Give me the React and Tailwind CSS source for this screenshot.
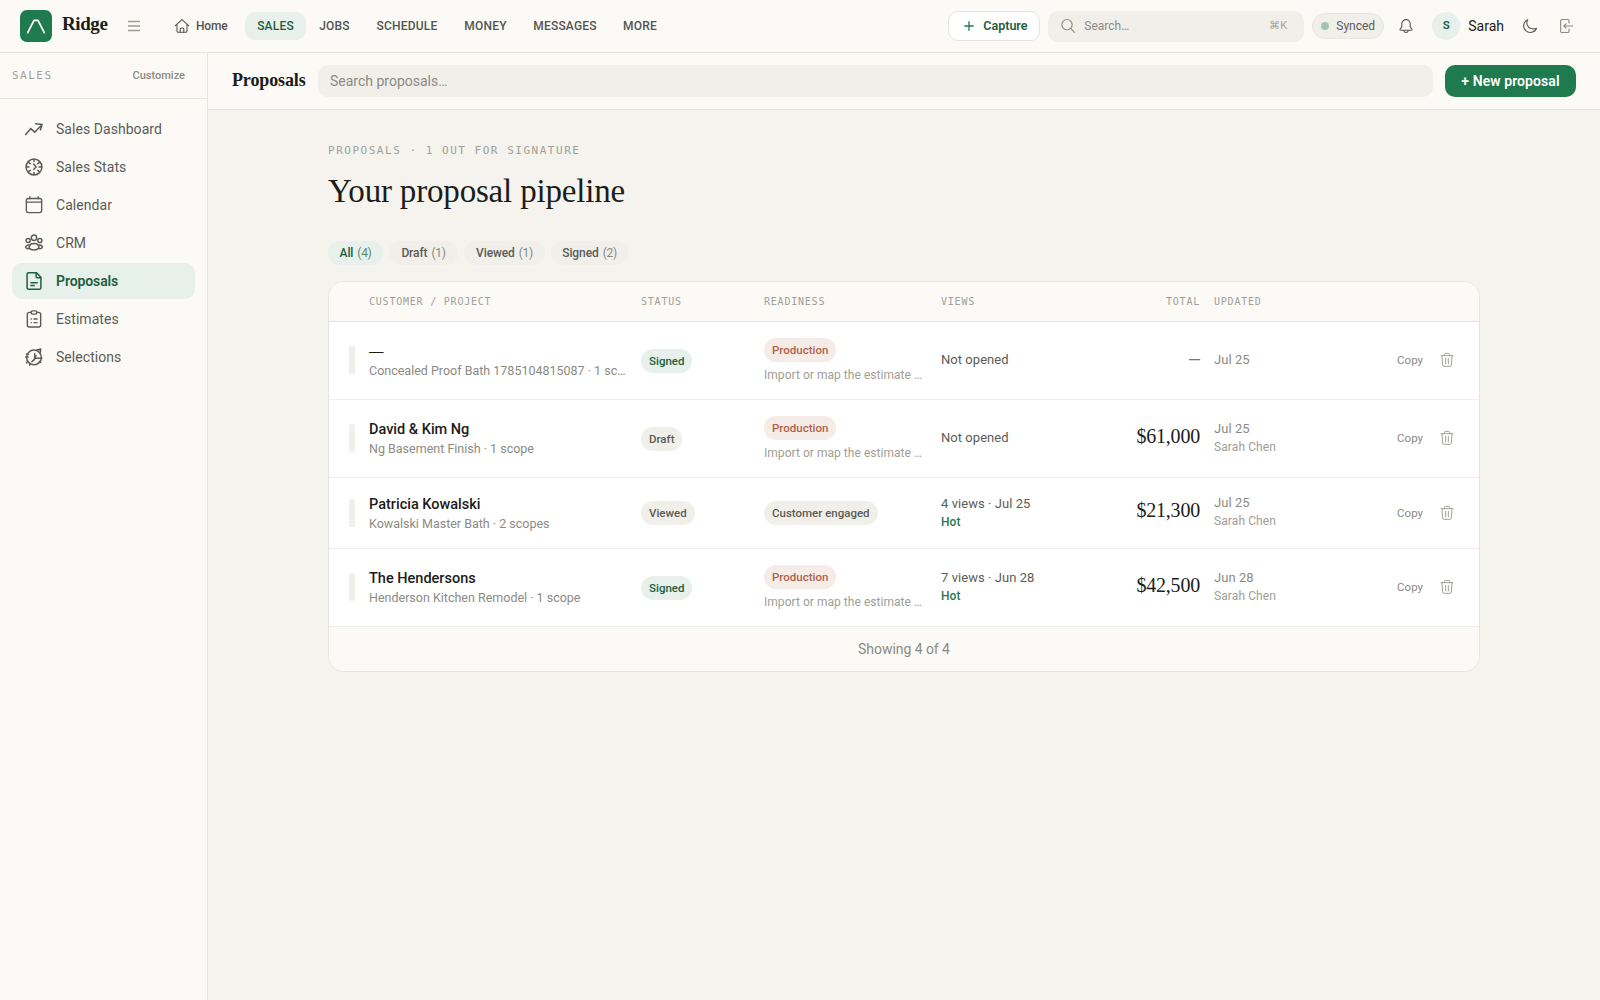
import clsx from 'clsx';

// Shared wrapper for the outline icons
function Icon({ className = 'size-5', strokeWidth = 1.5, children }) {
  return (
    <svg
      viewBox="0 0 24 24"
      fill="none"
      stroke="currentColor"
      strokeWidth={strokeWidth}
      strokeLinecap="round"
      strokeLinejoin="round"
      className={clsx('shrink-0', className)}
    >
      {children}
    </svg>
  );
}

const TrendIcon = () => (
  <Icon strokeWidth={1.8}>
    <path d="M2 18.5 8.2 11.5l4.6 4.3 8.7-8.8M14 5.800l7.700.7-2 6.500" />
  </Icon>
);

const StatsIcon = () => (
  <Icon strokeWidth={1.8}>
    <circle cx="12" cy="12" r="9.500" />
    <path d="M12 3v2.500M12 18.500V21M3 12h3M18 12h3M5.500 6.500l2 1.500M16.500 16l2 1.500M18.500 6.500l-2 1.500M7.500 16l-2 1.500M11.500 8.500l3 3.500-3 3" />
  </Icon>
);

const CalendarIcon = () => (
  <Icon strokeWidth={1.6}>
    <rect x="2.8" y="4.2" width="18.4" height="17" rx="2.5" />
    <path d="M2.8 8.500h18.400M7 2v2.500M17 2v2.500" />
  </Icon>
);

const PeopleIcon = () => (
  <Icon strokeWidth={1.8}>
    <circle cx="12" cy="5.7" r="3.2" />
    <circle cx="5" cy="9" r="2.5" />
    <circle cx="19" cy="9" r="2.5" />
    <path d="M6 18c0-3.500 2.500-5.500 6-5.500s6 2 6 5.500c-1.500 1.800-3.500 2.500-6 2.500S7.500 19.800 6 18ZM5.500 14.500c-2 0-3.500 1.200-3.500 3 .8 1 2 1.500 3.500 1.300M18.500 14.500c2 0 3.500 1.200 3.500 3-.8 1-2 1.500-3.500 1.300" />
  </Icon>
);

const DocumentIcon = () => (
  <Icon strokeWidth={1.8}>
    <path d="M5.500 2h9.500l5.300 5.500v12.500a1.800 1.800 0 0 1-1.800 1.800H5.500a1.800 1.800 0 0 1-1.800-1.800V3.800A1.800 1.800 0 0 1 5.500 2Z" />
    <path d="M14.500 2.300v4.200a1.500 1.500 0 0 0 1.500 1.500h4M8.300 14h7.500M8.300 17.500h4" />
  </Icon>
);

const ClipboardIcon = () => (
  <Icon strokeWidth={1.7}>
    <path d="M8.500 4H6.300A2.300 2.300 0 0 0 4 6.300v13A2.300 2.300 0 0 0 6.300 21.600h11.400a2.300 2.300 0 0 0 2.300-2.300v-13A2.300 2.300 0 0 0 17.700 4h-2.200" />
    <path d="M10.300 2.200h3.400a1.800 1.800 0 0 1 1.800 1.800v.3c0 1-.8 1.800-1.800 1.800h-3.400c-1 0-1.800-.8-1.800-1.800V4a1.800 1.800 0 0 1 1.800-1.800ZM8.600 12h.2M8.600 16.300h.2M12 12h3.700M12 16.300h3.700" />
  </Icon>
);

const SelectionsIcon = () => (
  <Icon strokeWidth={1.8}>
    <circle cx="12" cy="12.5" r="8.800" />
    <path d="M12.800 8v6.500L9.500 17.500M12.800 13.500H21.500M14.500 10.500l-1.700 3M15.500 3.500l4.500-1-.5 4.500M2 12h3M3 8.500l2 .5M4.500 17.500 3 19M7.500 20l-.8 1.800M18.500 17.500l1.500 1" />
  </Icon>
);

const HomeIcon = () => (
  <Icon className="size-4" strokeWidth={1.6}>
    <path d="m2 11.500 10-9 10 9M4.500 9.500v10a2 2 0 0 0 2 2h11a2 2 0 0 0 2-2v-10" />
    <path d="M9.300 21.500v-5a1.500 1.500 0 0 1 1.500-1.500h2.400a1.500 1.500 0 0 1 1.500 1.500v5" />
  </Icon>
);

const SearchIcon = () => (
  <Icon className="size-4" strokeWidth={1.7}>
    <circle cx="10.5" cy="10" r="7.7" />
    <path d="m16.500 16 5 5.500" />
  </Icon>
);

const BellIcon = () => (
  <Icon className="size-4" strokeWidth={1.7}>
    <path d="M12 2.500a6.300 6.300 0 0 0-6.300 6.300v4.400c0 1.300-2.700 2.800-2.700 4 0 .8.600 1.100 1.300 1.100h15.400c.7 0 1.300-.3 1.300-1.100 0-1.200-2.700-2.700-2.700-4V8.800A6.300 6.300 0 0 0 12 2.500ZM8.500 18.500c.3 2 1.700 3.200 3.500 3.200s3.200-1.200 3.500-3.200" />
  </Icon>
);

const MoonIcon = () => (
  <Icon className="size-4" strokeWidth={1.7}>
    <path d="M8.500 2.500a10 10 0 1 0 13.300 12.800c-6 2.400-11.800.3-13.800-4.300-1.200-2.900-.8-6 .5-8.500Z" />
  </Icon>
);

const LogoutIcon = () => (
  <Icon className="size-4" strokeWidth={1.7}>
    <path d="M16.500 7.500V4.300a2 2 0 0 0-2-2H6a2 2 0 0 0-2 2v15.400a2 2 0 0 0 2 2h8.500a2 2 0 0 0 2-2v-3.200M22 12H9M12 8.800 8.800 12l3.200 3.200" />
  </Icon>
);

const TrashIcon = () => (
  <Icon className="size-4" strokeWidth={1.5}>
    <path d="M3 5.500h18M8 5.500V4.300A2.300 2.300 0 0 1 10.300 2h3.400A2.300 2.300 0 0 1 16 4.300v1.200M4.500 5.500l.9 13.800a2.300 2.300 0 0 0 2.300 2.200h8.600a2.300 2.300 0 0 0 2.300-2.200L19.500 5.500M10 9.500v8.500M14 9.500v8.500" />
  </Icon>
);

const topNav = [
  { label: 'SALES', width: 'w-[61px]', active: true },
  { label: 'JOBS', width: 'w-[57px]' },
  { label: 'SCHEDULE', width: 'w-[88px]' },
  { label: 'MONEY', width: 'w-[69px]' },
  { label: 'MESSAGES', width: 'w-[90px]' },
  { label: 'MORE', width: 'w-[60px]' },
];

const sideNav = [
  { label: 'Sales Dashboard', icon: TrendIcon },
  { label: 'Sales Stats', icon: StatsIcon },
  { label: 'Calendar', icon: CalendarIcon },
  { label: 'CRM', icon: PeopleIcon },
  { label: 'Proposals', icon: DocumentIcon, active: true },
  { label: 'Estimates', icon: ClipboardIcon },
  { label: 'Selections', icon: SelectionsIcon },
];

const filters = [
  { label: 'All', count: 4, width: 'w-[55px]', active: true },
  { label: 'Draft', count: 1, width: 'w-[69px]' },
  { label: 'Viewed', count: 1, width: 'w-[81px]' },
  { label: 'Signed', count: 2, width: 'w-[77px]' },
];

const proposals = [
  {
    id: 1,
    customer: '—',
    project: 'Concealed Proof Bath 1785104815087 · 1 scope',
    status: 'Signed',
    readiness: 'Production',
    note: 'Import or map the estimate before production',
    views: 'Not opened',
    total: null,
    updated: 'Jul 25',
  },
  {
    id: 2,
    customer: 'David & Kim Ng',
    project: 'Ng Basement Finish · 1 scope',
    status: 'Draft',
    readiness: 'Production',
    note: 'Import or map the estimate before production',
    views: 'Not opened',
    total: '$61,000',
    updated: 'Jul 25',
    owner: 'Sarah Chen',
  },
  {
    id: 3,
    customer: 'Patricia Kowalski',
    project: 'Kowalski Master Bath · 2 scopes',
    status: 'Viewed',
    readiness: 'Customer engaged',
    views: '4 views · Jul 25',
    hot: true,
    total: '$21,300',
    updated: 'Jul 25',
    owner: 'Sarah Chen',
  },
  {
    id: 4,
    customer: 'The Hendersons',
    project: 'Henderson Kitchen Remodel · 1 scope',
    status: 'Signed',
    readiness: 'Production',
    note: 'Import or map the estimate before production',
    views: '7 views · Jun 28',
    hot: true,
    total: '$42,500',
    updated: 'Jun 28',
    owner: 'Sarah Chen',
  },
];

const columns =
  'grid grid-cols-[6px_258px_109px_163px_147px_98px_1fr_auto] gap-x-[14px] items-center px-5';

function Badge({ tone, children }) {
  return (
    <span
      className={clsx(
        'inline-flex h-6 items-center rounded-full px-2 pt-0.5 text-[11.5px] font-[530]',
        tone === 'green' && 'bg-[#e8f0eb] text-[#1b6040]',
        tone === 'clay' && 'bg-[#f6ece7] text-[#b0614a]',
        tone === 'neutral' && 'bg-[#f0efea] text-[#5c5c56]',
      )}
    >
      {children}
    </span>
  );
}

function TopBar() {
  return (
    <header className="flex h-[53px] shrink-0 items-center border-b border-[#e6e5dd] bg-[#fbfaf6] pr-[26px] pl-5">
      {/* Brand */}
      <div className="flex size-8 items-center justify-center rounded-[7px] bg-[#1f7a4e]">
        <svg viewBox="0 0 32 32" className="size-8" fill="none" stroke="#fff" strokeWidth="1.7" strokeLinecap="round" strokeLinejoin="round">
          <path d="M7.700 22.700 14 10.300h4l6.300 12.400" />
        </svg>
      </div>
      <div className="ml-[10px] w-[65px] pb-[3px] font-['Liberation_Serif',serif] text-[19px] font-bold tracking-[-0.4px] text-[#1c1c19]">
        Ridge
      </div>
      <svg viewBox="0 0 14 12" className="h-3 w-[14px]" stroke="#9b9b93" strokeWidth="1.6">
        <path d="M1 1.500h12M1 6h12M1 10.500h12" />
      </svg>

      {/* Primary navigation */}
      <nav className="ml-[33px] flex items-center text-[12px] font-medium text-[#55554f]">
        <a className="flex w-[71px] items-center gap-[6px]">
          <HomeIcon />
          <span className="tracking-[-0.2px]">Home</span>
        </a>
        {topNav.map((item) => (
          <a
            key={item.label}
            className={clsx(
              'flex h-7 items-center justify-center rounded-[10px] tracking-[0.2px]',
              item.width,
              item.active && 'bg-[#e8f0eb] text-[#1b6040]',
            )}
          >
            {item.label}
          </a>
        ))}
      </nav>

      {/* Utilities */}
      <div className="ml-auto flex items-center">
        <button className="flex h-[30px] w-[92px] items-center rounded-[10px] border border-[#e6e5dd] bg-white pl-[15px] text-[12.5px] font-[570] text-[#1b6040]">
          <svg viewBox="0 0 10 10" className="size-[10px]" stroke="#1f7a4e" strokeWidth="1.3">
            <path d="M5 .3v9.400M.3 5h9.400" />
          </svg>
          <span className="ml-[9px]">Capture</span>
        </button>
        <div className="ml-2 flex h-[31px] w-64 items-center rounded-[10px] bg-[#f0efea] pr-[17px] pl-3 text-[#8b8b83]">
          <SearchIcon />
          <span className="ml-2 text-[12px]">Search…</span>
          <span className="ml-auto text-[11px] text-[#a5a59d]">⌘K</span>
        </div>
        <div className="ml-2 flex h-[26px] w-[72px] items-center gap-[7px] rounded-full border border-[#e6e5dd] bg-[#f0efea] pl-2 text-[12px] font-[450] text-[#5c5c56]">
          <span className="size-2 rounded-full bg-[#a5c5b4]" />
          Synced
        </div>
        <button className="ml-[14px] text-[#5c5c56]">
          <BellIcon />
        </button>
        <div className="ml-[18px] flex size-7 items-center justify-center rounded-full bg-[#e8f0eb] text-[11.5px] font-semibold text-[#1b6040]">
          S
        </div>
        <span className="ml-2 text-[14px] font-[450] text-[#1c1c19]">Sarah</span>
        <button className="ml-[18px] text-[#5c5c56]">
          <MoonIcon />
        </button>
        <button className="ml-5 text-[#8b8b83]">
          <LogoutIcon />
        </button>
      </div>
    </header>
  );
}

function Sidebar() {
  return (
    <aside className="w-52 shrink-0 border-r border-[#e6e5dd] bg-[#fbfaf6]">
      <div className="flex h-[46px] items-center justify-between border-b border-[#e6e5dd] pr-[22px] pl-3">
        <span className="pt-0.5 font-['DejaVu_Sans_Mono',monospace] text-[11px] tracking-[1.5px] text-[#a0a098]">SALES</span>
        <span className="pt-px text-[11px] font-medium text-[#8b8b83]">Customize</span>
      </div>
      <nav className="flex flex-col gap-[2px] p-3">
        {sideNav.map((item) => (
          <a
            key={item.label}
            className={clsx(
              'flex h-9 items-center gap-3 rounded-[10px] px-3 text-[14px]',
              item.active
                ? 'bg-[#e8f0eb] font-[560] tracking-[-0.1px] text-[#1b6040]'
                : 'font-[440] tracking-[0.05px] text-[#5c5c56]',
            )}
          >
            <item.icon />
            {item.label}
          </a>
        ))}
      </nav>
    </aside>
  );
}

function ProposalRow({ proposal }) {
  const { customer, project, status, readiness, note, views, hot, total, updated, owner } = proposal;

  return (
    <div className={clsx(columns, 'border-b border-[#efeee8]', note ? 'h-[78px]' : 'h-[71px]')}>
      <span className="mb-px h-7 w-[6px] rounded-[2px] bg-[#f0efea]" />
      <div className="min-w-0">
        {customer === '—' ? (
          <div className="pb-px font-['Liberation_Sans',sans-serif] text-[14.5px] leading-5 font-medium text-[#1c1c19]">—</div>
        ) : (
          <div className="pt-px text-[14.5px] leading-5 font-medium text-[#1c1c19]">{customer}</div>
        )}
        <div className="truncate text-[12.5px] leading-[18px] text-[#8b8b83]">{project}</div>
      </div>
      <div className="flex">
        <Badge tone={status === 'Signed' ? 'green' : 'neutral'}>{status}</Badge>
      </div>
      <div className="min-w-0">
        <div className="flex">
          <Badge tone={note ? 'clay' : 'neutral'}>{readiness}</Badge>
        </div>
        {note && (
          <div className="mt-1 w-[160px] truncate text-[12px] leading-[18px] tracking-[0.04px] text-[#a0a098]">{note}</div>
        )}
      </div>
      <div className={clsx('text-[13px] leading-[19px] tracking-[0.05px] text-[#5c5c56]', hot ? 'pb-px' : 'pb-0.5')}>
        {views}
        {hot && <div className="text-[12px] leading-[19px] font-medium text-[#1f7a4e]">Hot</div>}
      </div>
      {total ? (
        <div className="pb-[6px] text-right font-['Liberation_Serif',serif] text-[20px] tracking-[-0.2px] text-[#1c1c19]">
          {total}
        </div>
      ) : (
        <div className="pb-0.5 text-right font-['Liberation_Sans',sans-serif] text-[11px] font-bold text-[#77776f]">—</div>
      )}
      <div className="pb-0.5 text-[13px] leading-[19px] tracking-[0.05px] text-[#8b8b83]">
        {updated}
        {owner && <div className="text-[12px] leading-[19px] tracking-[0.1px] text-[#a0a098]">{owner}</div>}
      </div>
      <div className="flex items-center gap-4 pr-1 pb-px text-[#a0a098]">
        <span className="pt-0.5 text-[11.5px] text-[#8b8b83]">Copy</span>
        <TrashIcon />
      </div>
    </div>
  );
}

function App() {
  return (
    <div className="flex h-screen flex-col overflow-hidden bg-[#f4f3ee] font-['Roboto',sans-serif]">
      <TopBar />
      <div className="flex min-h-0 flex-1">
        <Sidebar />
        <main className="flex min-w-0 flex-1 flex-col">
          {/* Page toolbar */}
          <div className="flex h-[57px] items-center gap-3 border-b border-[#e6e5dd] bg-[#fbfaf6] px-6">
            <h1 className="w-[74px] pb-0.5 font-['Liberation_Serif',serif] text-[18px] font-bold tracking-[-0.13px] text-[#1c1c19]">
              Proposals
            </h1>
            <div className="flex h-8 flex-1 items-center rounded-[10px] bg-[#f0efea] px-3 text-[14px] text-[#8b8b83]">
              Search proposals…
            </div>
            <button className="h-8 w-[131px] rounded-[10px] bg-[#1f7a4e] text-[14px] font-semibold tracking-[0.08px] text-white">
              + New proposal
            </button>
          </div>

          <div className="mx-auto w-full max-w-6xl pt-[33px]">
            <p className="font-['DejaVu_Sans_Mono',monospace] text-[11px] leading-4 tracking-[1.52px] text-[#a0a098]">
              PROPOSALS · 1 OUT FOR SIGNATURE
            </p>
            <h2 className="mt-3 font-['Liberation_Serif',serif] text-[33px] leading-[40px] tracking-[-0.18px] text-[#1c1c19]">
              Your proposal pipeline
            </h2>

            {/* Status filters */}
            <div className="mt-[30px] flex gap-[6px]">
              {filters.map((filter) => (
                <button
                  key={filter.label}
                  className={clsx(
                    'flex h-6 items-center justify-center gap-1 rounded-full text-[12px] font-[540] tracking-[-0.1px]',
                    filter.width,
                    filter.active ? 'bg-[#e8f0eb] text-[#1b6040]' : 'bg-[#f0efea] text-[#5c5c56]',
                  )}
                >
                  {filter.label}
                  <span className="font-normal tracking-[-0.3px] opacity-70">({filter.count})</span>
                </button>
              ))}
            </div>

            {/* Proposal list */}
            <section className="mt-4 overflow-hidden rounded-2xl border border-[#e6e5dd] bg-white">
              <div
                className={clsx(
                  columns,
                  "h-10 border-b border-[#e6e5dd] bg-[#fbfaf6] font-['DejaVu_Sans_Mono',monospace] text-[10px] tracking-[0.78px] text-[#a0a098]",
                )}
              >
                <span />
                <span>CUSTOMER / PROJECT</span>
                <span>STATUS</span>
                <span>READINESS</span>
                <span>VIEWS</span>
                <span className="text-right">TOTAL</span>
                <span>UPDATED</span>
                <span />
              </div>
              {proposals.map((proposal) => (
                <ProposalRow key={proposal.id} proposal={proposal} />
              ))}
              <div className="flex h-11 items-center justify-center bg-[#fbfaf6] text-[14px] tracking-[-0.05px] text-[#8b8b83]">
                Showing 4 of 4
              </div>
            </section>
          </div>
        </main>
      </div>
    </div>
  );
}

export default App;
